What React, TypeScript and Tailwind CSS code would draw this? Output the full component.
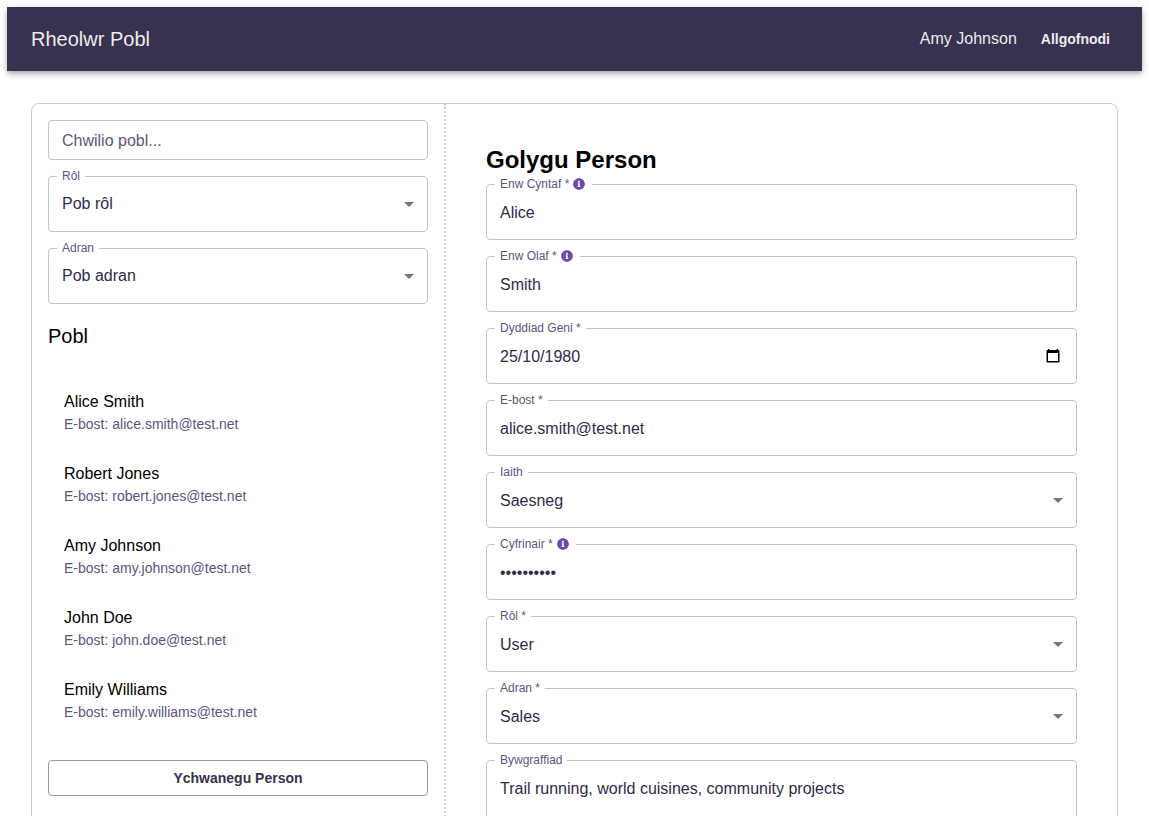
import { useState } from "react";
import type { ReactNode } from "react";
import { FaInfoCircle } from "react-icons/fa";

type Person = { name: string; email: string };

const people: Person[] = [
  { name: "Alice Smith", email: "alice.smith@test.net" },
  { name: "Robert Jones", email: "robert.jones@test.net" },
  { name: "Amy Johnson", email: "amy.johnson@test.net" },
  { name: "John Doe", email: "john.doe@test.net" },
  { name: "Emily Williams", email: "emily.williams@test.net" },
];

const controlClass =
  "block h-14 w-full appearance-none rounded border border-[#c4c4c4] bg-transparent px-[13px] text-base text-[#2f2b4a] outline-none focus:border-[#38314f]";

type FieldProps = {
  id: string;
  label: string;
  required?: boolean;
  info?: boolean;
  children: ReactNode;
};

function Field({ id, label, required, info, children }: FieldProps) {
  return (
    <div className="relative">
      {children}
      <label
        htmlFor={id}
        className="absolute -top-2 left-[9px] flex h-4 items-center bg-white px-[5px] text-xs text-[#5a5680]"
      >
        {required ? `${label} *` : label}
        {info && <FaInfoCircle className="mr-0.5 ml-1 size-3 text-[#6b4bad]" aria-hidden="true" />}
      </label>
    </div>
  );
}

function TextField(props: { id: string; label: string; value: string; type?: string; required?: boolean; info?: boolean }) {
  const { id, label, value, type = "text", required, info } = props;
  return (
    <Field id={id} label={label} required={required} info={info}>
      <input id={id} type={type} defaultValue={value} required={required} className={`${controlClass} pt-0.5`} />
    </Field>
  );
}

function SelectField(props: { id: string; label: string; options: string[]; required?: boolean; compact?: boolean }) {
  const { id, label, options, required, compact } = props;
  return (
    <Field id={id} label={label} required={required}>
      <select id={id} required={required} className={`${controlClass} ${compact ? "" : "pt-0.5"}`}>
        {options.map((option) => (
          <option key={option}>{option}</option>
        ))}
      </select>
      <svg viewBox="0 0 24 24" className="pointer-events-none absolute top-4 right-[7px] size-6 fill-[#757575]" aria-hidden="true">
        <path d="M7 10l5 5 5-5z" />
      </svg>
    </Field>
  );
}

function Sidebar() {
  const [query, setQuery] = useState("");
  const shown = people.filter((p) => p.name.toLowerCase().includes(query.toLowerCase()));

  return (
    <aside className="flex w-[414px] shrink-0 flex-col border-r-2 border-dotted border-[#cccccc] p-4">
      <div className="flex flex-col gap-4">
        <input
          type="search"
          aria-label="Chwilio pobl"
          placeholder="Chwilio pobl..."
          value={query}
          onChange={(e) => setQuery(e.target.value)}
          className="h-10 w-full appearance-none rounded border border-[#c4c4c4] px-[13px] pt-0.5 text-base text-[#2f2b4a] outline-none placeholder:text-[#5a5680]"
        />
        <SelectField id="filter-role" label="Rôl" options={["Pob rôl", "User", "Admin"]} compact />
        <SelectField id="filter-department" label="Adran" options={["Pob adran", "Sales"]} compact />
      </div>
      <h2 className="mt-4 text-xl leading-8">Pobl</h2>
      <ul className="mt-6">
        {shown.map((person) => (
          <li key={person.email}>
            <button type="button" className="flex h-[72px] w-full flex-col justify-center px-4 text-left">
              <span className="text-base">{person.name}</span>
              <span className="text-sm text-[#5a5680]">E-bost: {person.email}</span>
            </button>
          </li>
        ))}
      </ul>
      <button
        type="button"
        className="mt-6 h-9 rounded border border-[#9b98a7] text-sm font-bold text-[#38314f]"
      >
        Ychwanegu Person
      </button>
    </aside>
  );
}

function EditForm() {
  return (
    <form className="min-w-0 flex-1 p-10">
      <h1 className="mb-2 text-2xl font-bold">Golygu Person</h1>
      <div className="flex flex-col gap-4">
        <TextField id="first-name" label="Enw Cyntaf" value="Alice" required info />
        <TextField id="last-name" label="Enw Olaf" value="Smith" required info />
        <Field id="birth-date" label="Dyddiad Geni" required>
          <input id="birth-date" type="text" defaultValue="25/10/1980" required className={`${controlClass} pt-0.5`} />
          <button type="button" aria-label="Dewis dyddiad" className="absolute top-5 right-4 size-4">
            <svg viewBox="0 0 16 16" className="size-4" aria-hidden="true">
              <path
                fillRule="evenodd"
                d="M3 1h1.3v1h7.4V1H13v1h.4c.7 0 1.100.4 1.100 1.100v10.300c0 .7-.4 1.100-1.100 1.100H2.600c-.7 0-1.100-.4-1.100-1.100V3.100C1.500 2.400 1.900 2 2.600 2H3zM3 5v8h10V5z"
              />
            </svg>
          </button>
        </Field>
        <TextField id="email" label="E-bost" type="email" value="alice.smith@test.net" required />
        <SelectField id="language" label="Iaith" options={["Saesneg", "Cymraeg"]} />
        <TextField id="password" label="Cyfrinair" type="password" value="password12" required info />
        <SelectField id="role" label="Rôl" options={["User", "Admin"]} required />
        <SelectField id="department" label="Adran" options={["Sales"]} required />
        <Field id="bio" label="Bywgraffiad">
          <textarea
            id="bio"
            defaultValue="Trail running, world cuisines, community projects"
            className="block h-28 w-full resize-none rounded border border-[#c4c4c4] bg-transparent px-[13px] py-4 text-base text-[#2f2b4a] outline-none"
          />
        </Field>
      </div>
    </form>
  );
}

export default function App() {
  return (
    <div className="min-h-screen bg-white p-[7px] font-['Liberation_Sans',Arial,sans-serif] text-black">
      <header className="flex h-16 items-center bg-[#38314f] px-6 text-[#ececec] shadow-[0_2px_4px_-1px_rgba(0,0,0,0.2),0_4px_5px_0_rgba(0,0,0,0.14),0_1px_10px_0_rgba(0,0,0,0.12)]">
        <span className="flex-1 text-xl">Rheolwr Pobl</span>
        <span className="mr-4 text-base">Amy Johnson</span>
        <button type="button" className="h-9 px-2 text-sm font-bold">
          Allgofnodi
        </button>
      </header>
      <main className="mx-6 my-8 flex rounded-lg border border-[#cccccc]">
        <Sidebar />
        <EditForm />
      </main>
    </div>
  );
}
